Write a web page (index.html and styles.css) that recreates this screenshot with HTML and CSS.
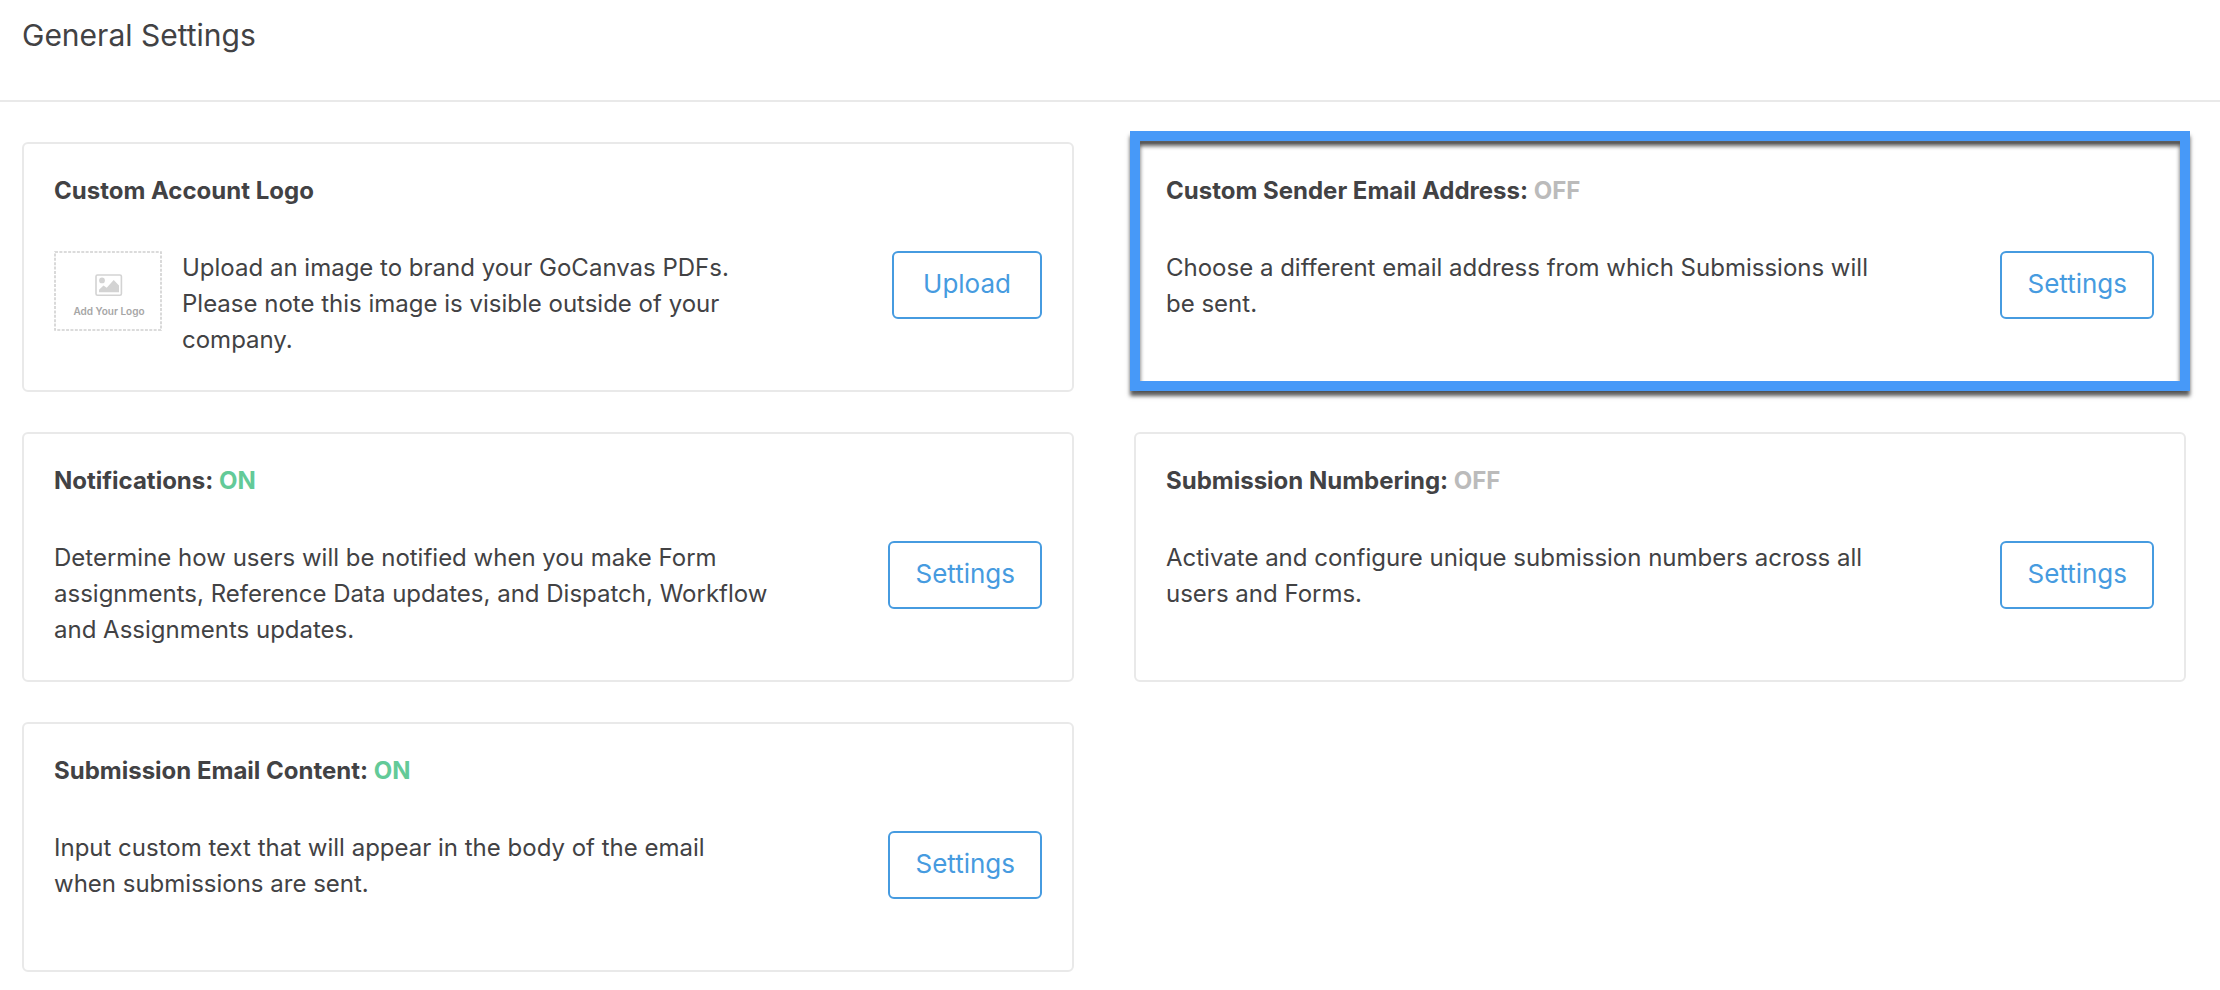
FILE: index.html
```
<!DOCTYPE html>
<html lang="en">
<head>
  <meta charset="UTF-8" />
  <meta name="viewport" content="width=device-width, initial-scale=1.0"/>
  <title>General Settings</title>
  <link rel="stylesheet" href="styles.css">
</head>
<body>
  <header class="page-header">
    <h1>General Settings</h1>
  </header>

  <main class="settings-grid">
    <section class="card">
      <h2>Custom Account Logo</h2>
      <div class="card-body">
        <div class="info">
          <svg class="logo-placeholder" width="108" height="80" viewBox="0 0 108 80">
            <rect x="1" y="1" width="106" height="78" fill="none" stroke="#d0d0d0" stroke-width="1.6" stroke-dasharray="3 1.38"/>
            <rect x="42" y="24" width="25.4" height="20.2" rx="1.5" fill="none" stroke="#d3d3d3" stroke-width="1.6"/>
            <circle cx="48" cy="29.4" r="2.9" fill="#d3d3d3"/>
            <path d="M45 41.2v-2.4l4.5-4.4 3.2 2.4 7-7.8 5.3 5.6v6.6z" fill="#d3d3d3"/>
            <text x="55" y="64" text-anchor="middle">Add Your Logo</text>
          </svg>
          <p>Upload an image to brand your GoCanvas PDFs. Please note this image is visible outside of your company.</p>
        </div>
        <button type="button" class="btn">Upload</button>
      </div>
    </section>

    <section class="card highlighted">
      <h2>Custom Sender Email Address: <span class="off">OFF</span></h2>
      <div class="card-body">
        <div class="info">
          <p>Choose a different email address from which Submissions will be sent.</p>
        </div>
        <button type="button" class="btn">Settings</button>
      </div>
    </section>

    <section class="card">
      <h2>Notifications: <span class="on">ON</span></h2>
      <div class="card-body">
        <div class="info">
          <p>Determine how users will be notified when you make Form assignments, Reference Data updates, and Dispatch, Workflow and Assignments updates.</p>
        </div>
        <button type="button" class="btn">Settings</button>
      </div>
    </section>

    <section class="card">
      <h2>Submission Numbering: <span class="off">OFF</span></h2>
      <div class="card-body">
        <div class="info">
          <p>Activate and configure unique submission numbers across all users and Forms.</p>
        </div>
        <button type="button" class="btn">Settings</button>
      </div>
    </section>

    <section class="card">
      <h2>Submission Email Content: <span class="on">ON</span></h2>
      <div class="card-body">
        <div class="info">
          <p>Input custom text that will appear in the body of the email when submissions are sent.</p>
        </div>
        <button type="button" class="btn">Settings</button>
      </div>
    </section>
  </main>
</body>
</html>
```
FILE: styles.css
```
* {
  box-sizing: border-box;
}
body {
  font-family: Inter, 'Liberation Sans', sans-serif;
  background: #fff;
  color: #424244;
  margin: 0;
}
h1, h2, p {
  margin: 0;
}
.page-header {
  padding: 15px 22px 45px;
  border-bottom: 2px solid #e9e9e9;
}
h1 {
  font-size: 30px;
  font-weight: 400;
  line-height: 40px;
}
.settings-grid {
  display: grid;
  grid-template-columns: 1fr 1fr;
  gap: 40px 60px;
  padding: 40px 34px 0 22px;
}
.card {
  position: relative;
  min-height: 250px;
  padding: 29px 30px 28px;
  border: 2px solid #e9e9e9;
  border-radius: 6px;
}
h2 {
  margin-bottom: 41px;
  font-size: 24px;
  font-weight: 700;
  line-height: 36px;
}
.on {
  color: #63ca98;
}
.off {
  color: #bbb;
}
.card-body {
  display: flex;
  justify-content: space-between;
  align-items: flex-start;
  gap: 20px;
}
.info {
  display: flex;
  align-items: flex-start;
  gap: 20px;
  max-width: 716px;
  font-size: 24px;
  line-height: 36px;
}
.logo-placeholder {
  flex: none;
  margin-top: 1px;
}
.logo-placeholder text {
  font-size: 10px;
  font-weight: 600;
  fill: #a6a6a6;
}
.btn {
  flex: none;
  min-width: 150px;
  height: 68px;
  margin-top: 1px;
  padding: 0 25px 3px;
  border: 2px solid #469be0;
  border-radius: 6px;
  background: #fff;
  color: #469be0;
  font-family: inherit;
  font-size: 26px;
  cursor: pointer;
}

/* frame drawn over the card edges */
.highlighted::after {
  content: '';
  position: absolute;
  top: -13px;
  right: -6px;
  bottom: -1px;
  left: -6px;
  border: 10px solid #4799f8;
  box-shadow: 0 5px 4px rgba(0, 0, 0, 0.65), inset 0 5px 4px rgba(0, 0, 0, 0.65);
  pointer-events: none;
}
```
